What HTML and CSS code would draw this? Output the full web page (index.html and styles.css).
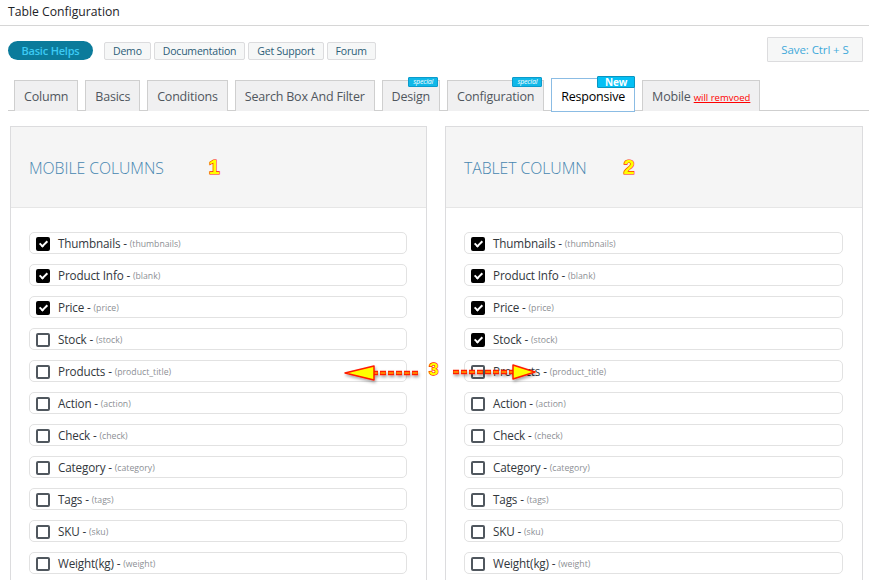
FILE: index.html
```html
<!DOCTYPE html>
<html>
<head>
<meta charset="utf-8">
<link rel="stylesheet" href="styles.css">
</head>
<body>
<div class="page">
  <h1 class="title">Table Configuration</h1>
  <div class="toolbar">
    <div class="help-links">
      <a class="pill">Basic Helps</a>
      <a class="link-btn">Demo</a>
      <a class="link-btn">Documentation</a>
      <a class="link-btn">Get Support</a>
      <a class="link-btn">Forum</a>
    </div>
    <button class="save">Save: Ctrl + S</button>
  </div>
  <nav class="tabs">
    <a class="tab">Column</a>
    <a class="tab">Basics</a>
    <a class="tab">Conditions</a>
    <a class="tab">Search Box And Filter</a>
    <a class="tab">Design<span class="badge special">special</span></a>
    <a class="tab">Configuration<span class="badge special">special</span></a>
    <a class="tab active">Responsive<span class="badge new">New</span></a>
    <a class="tab">Mobile <span class="warn">will remvoed</span></a>
  </nav>
  <div class="panels">
    <section class="panel">
      <header class="panel-head"><h2>MOBILE COLUMNS</h2><span class="marker">1</span></header>
      <div class="panel-body">
        <label class="row"><span class="cb on"></span><span class="name">Thumbnails - </span><span class="key">(thumbnails)</span></label>
        <label class="row"><span class="cb on"></span><span class="name">Product Info - </span><span class="key">(blank)</span></label>
        <label class="row"><span class="cb on"></span><span class="name">Price - </span><span class="key">(price)</span></label>
        <label class="row"><span class="cb"></span><span class="name">Stock - </span><span class="key">(stock)</span></label>
        <label class="row"><span class="cb"></span><span class="name">Products - </span><span class="key">(product_title)</span></label>
        <label class="row"><span class="cb"></span><span class="name">Action - </span><span class="key">(action)</span></label>
        <label class="row"><span class="cb"></span><span class="name">Check - </span><span class="key">(check)</span></label>
        <label class="row"><span class="cb"></span><span class="name">Category - </span><span class="key">(category)</span></label>
        <label class="row"><span class="cb"></span><span class="name">Tags - </span><span class="key">(tags)</span></label>
        <label class="row"><span class="cb"></span><span class="name">SKU - </span><span class="key">(sku)</span></label>
        <label class="row"><span class="cb"></span><span class="name">Weight(kg) - </span><span class="key">(weight)</span></label>
      </div>
    </section>
    <section class="panel tablet">
      <header class="panel-head"><h2>TABLET COLUMN</h2><span class="marker">2</span></header>
      <div class="panel-body">
        <label class="row"><span class="cb on"></span><span class="name">Thumbnails - </span><span class="key">(thumbnails)</span></label>
        <label class="row"><span class="cb on"></span><span class="name">Product Info - </span><span class="key">(blank)</span></label>
        <label class="row"><span class="cb on"></span><span class="name">Price - </span><span class="key">(price)</span></label>
        <label class="row"><span class="cb on"></span><span class="name">Stock - </span><span class="key">(stock)</span></label>
        <label class="row"><span class="cb"></span><span class="name">Products - </span><span class="key">(product_title)</span></label>
        <label class="row"><span class="cb"></span><span class="name">Action - </span><span class="key">(action)</span></label>
        <label class="row"><span class="cb"></span><span class="name">Check - </span><span class="key">(check)</span></label>
        <label class="row"><span class="cb"></span><span class="name">Category - </span><span class="key">(category)</span></label>
        <label class="row"><span class="cb"></span><span class="name">Tags - </span><span class="key">(tags)</span></label>
        <label class="row"><span class="cb"></span><span class="name">SKU - </span><span class="key">(sku)</span></label>
        <label class="row"><span class="cb"></span><span class="name">Weight(kg) - </span><span class="key">(weight)</span></label>
      </div>
    </section>
    <svg class="arrows" width="200" height="30" viewBox="340 358 200 30">
      <defs>
        <filter id="sh" x="-20%" y="-50%" width="140%" height="200%">
          <feDropShadow dx="1" dy="2" stdDeviation="1.5" flood-color="#000" flood-opacity="0.35"/>
        </filter>
      </defs>
      <g filter="url(#sh)">
        <line x1="372" y1="373" x2="420" y2="373" stroke="#ff1a00" stroke-width="4.5" stroke-dasharray="6 2"/>
        <line x1="372" y1="373" x2="420" y2="373" stroke="#ffe500" stroke-width="1.2" stroke-dasharray="5 3" stroke-dashoffset="-0.5"/>
        <polygon points="345,373 374,366 374,380" fill="#ffff00" stroke="#ff1a00" stroke-width="1.5" stroke-linejoin="round"/>
        <line x1="453" y1="372" x2="514" y2="372" stroke="#ff1a00" stroke-width="4.5" stroke-dasharray="6 2"/>
        <line x1="453" y1="372" x2="514" y2="372" stroke="#ffe500" stroke-width="1.2" stroke-dasharray="5 3" stroke-dashoffset="-0.5"/>
        <polygon points="535,372 513,365 513,379" fill="#ffff00" stroke="#ff1a00" stroke-width="1.5" stroke-linejoin="round"/>
      </g>
      <text x="429" y="375" class="num3">3</text>
    </svg>
  </div>
</div>
</body>
</html>
```
FILE: styles.css
```css
html, body {
  margin: 0;
  padding: 0;
  overflow: hidden;
  background: #ffffff;
}
body {
  font-family: "Open Sans", "Noto Sans", sans-serif;
  color: #1d2327;
}
.page {
  position: relative;
  width: 869px;
  height: 580px;
}
.title {
  margin: 0;
  height: 26px;
  box-sizing: border-box;
  padding: 3px 8px 0;
  font-size: 12.2px;
  font-weight: 400;
  line-height: 18px;
  border-bottom: 1px solid #d6d6d6;
  color: #1d2327;
}
.toolbar {
  display: flex;
  justify-content: space-between;
  align-items: flex-start;
  padding: 11px 6px 0 8px;
  height: 40px;
  box-sizing: border-box;
}
.help-links {
  display: flex;
  align-items: center;
  margin-top: 4px;
}
.pill {
  display: inline-block;
  width: 85px;
  height: 19px;
  line-height: 19px;
  border-radius: 10px;
  background: #0b7b9b;
  color: #3ccaf3;
  font-size: 11px;
  font-weight: 600;
  text-align: center;
  margin-right: 11px;
  letter-spacing: -0.2px;
}
.link-btn {
  display: inline-block;
  height: 18px;
  line-height: 16px;
  box-sizing: border-box;
  padding: 0 8px;
  margin-right: 3px;
  border: 1px solid #dcdcde;
  border-radius: 2px;
  background: #f6f7f7;
  color: #2c5d78;
  font-size: 10.5px;
  letter-spacing: -0.2px;
}
.save {
  width: 96px;
  height: 25px;
  border: 1px solid #dcdcde;
  background: #f6f7f7;
  color: #3fa9da;
  font-family: "Open Sans", sans-serif;
  font-size: 11.5px;
  padding: 0;
  border-radius: 1px;
  letter-spacing: -0.1px;
}
.tabs {
  display: flex;
  align-items: flex-end;
  margin: 0 0 0 8px;
  padding-left: 6px;
  height: 45px;
  box-sizing: border-box;
  border-bottom: 1px solid #cfcfcf;
}
.tab {
  position: relative;
  display: inline-block;
  height: 31px;
  line-height: 31px;
  box-sizing: border-box;
  padding: 0 9px;
  margin-right: 7px;
  margin-bottom: -1px;
  border: 1px solid #cfcfcf;
  border-bottom: none;
  background: #f0f0f1;
  color: #50575e;
  font-size: 12.5px;
  letter-spacing: -0.2px;
  white-space: nowrap;
}
.tab.active {
  height: 34px;
  line-height: 36px;
  margin-bottom: -2px;
  background: #ffffff;
  color: #000000;
  border: 1px solid #8bbce4;
}
.warn {
  color: #ff0000;
  font-size: 9.5px;
  text-decoration: underline;
  letter-spacing: 0;
}
.badge {
  position: absolute;
  top: -4px;
  right: 1px;
  background: #10b8e8;
  color: #ffffff;
  border: 1px solid #0b9bcc;
  line-height: 8px;
  height: 10px;
  box-sizing: border-box;
  padding: 0 4px;
  font-size: 7px;
  font-style: italic;
  border-radius: 1px;
}
.badge.new {
  top: -3px;
  right: -1px;
  height: 12px;
  line-height: 11px;
  font-size: 10px;
  font-style: normal;
  font-weight: 700;
  padding: 0 7px;
  background: #04c0f5;
  border-color: #0a95c0;
}
.panels {
  display: grid;
  grid-template-columns: 417px 418px;
  column-gap: 18px;
  padding: 15px 0 0 10px;
}
.panel {
  border: 1px solid #dcdcde;
  background: #ffffff;
}
.panel-head {
  display: flex;
  align-items: center;
  height: 81px;
  box-sizing: border-box;
  padding: 2px 18px 0;
  background: #f5f5f5;
  border-bottom: 1px solid #e6e6e6;
}
.panel-head h2 {
  margin: 0;
  font-size: 15.8px;
  font-weight: 300;
  color: #4786b0;
  letter-spacing: -0.05px;
}
.marker {
  margin-left: 45px;
  margin-top: -2px;
  font-family: "Liberation Sans", sans-serif;
  font-weight: 700;
  font-size: 20px;
  color: #ffff00;
  -webkit-text-stroke: 1.2px #ff1a00;
  paint-order: stroke fill;
}
.tablet .marker {
  margin-left: 37px;
}
.panel-body {
  padding: 24px 19px 20px 18px;
  display: flex;
  flex-direction: column;
  gap: 10px;
}
.row {
  display: flex;
  align-items: center;
  height: 22px;
  box-sizing: border-box;
  border: 1px solid #e2e2e2;
  border-radius: 5px;
  padding-left: 6px;
  font-size: 11.7px;
  color: #32373c;
  white-space: pre;
}
.cb {
  width: 14px;
  height: 14px;
  box-sizing: border-box;
  border: 2px solid #50575e;
  border-radius: 2px;
  margin-right: 8px;
  margin-top: 2px;
  background: #fff;
  position: relative;
}
.cb.on {
  background: #000000;
  border-color: #000000;
}
.cb.on::after {
  content: "";
  position: absolute;
  left: 3px;
  top: 0px;
  width: 3px;
  height: 6px;
  border: solid #ffffff;
  border-width: 0 2px 2px 0;
  transform: rotate(45deg);
}
.name {
  letter-spacing: -0.15px;
}
.key {
  font-size: 8.7px;
  color: #8c8f94;
  margin-top: 2px;
}
.arrows {
  position: absolute;
  left: 340px;
  top: 358px;
  overflow: visible;
}
.num3 {
  font-family: "Liberation Sans", sans-serif;
  font-weight: 700;
  font-size: 17px;
  fill: #ffff00;
  stroke: #ff1a00;
  stroke-width: 1.3px;
  paint-order: stroke fill;
}
```
